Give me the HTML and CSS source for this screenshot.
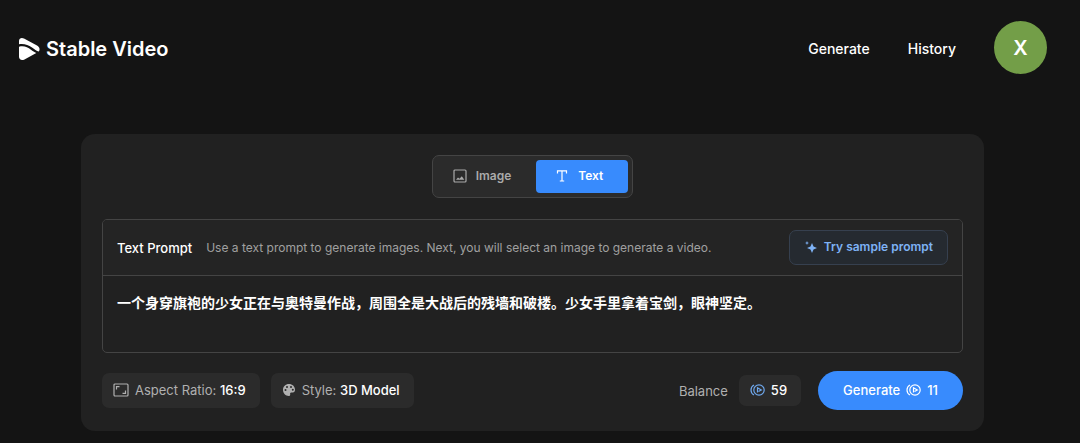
FILE: index.html
```html
<!DOCTYPE html>
<html lang="en">
<head>
    <meta charset="UTF-8">
    <meta name="viewport" content="width=device-width, initial-scale=1.0">
    <title>Stable Video</title>
    <link rel="stylesheet" href="styles.css">
</head>
<body>
    <header class="header">
        <a class="logo" href="#">
            <svg width="22" height="24" viewBox="0 0 22 24" fill="#fff" aria-hidden="true">
                <path d="M1 7.200V4C1 1.500 3.500 .3 6 1.600L19 8.600C21.500 10 22.300 12.300 20.800 14.600C18.500 14.200 16.500 12.500 14 10.600C10 7.600 6 6.500 1 7.200Z"/>
                <path d="M1 9.700C6 8.500 9.500 10 13 12.800C14.800 14.200 16.300 15.200 18.300 15.900L6.500 22.400C3.500 24 1 22.500 1 19.800Z"/>
            </svg>
            <span>Stable Video</span>
        </a>
        <nav class="nav">
            <a href="#">Generate</a>
            <a href="#">History</a>
            <button class="avatar" type="button">X</button>
        </nav>
    </header>

    <main class="panel">
        <div class="tabs">
            <button class="tab" type="button">
                <svg width="14" height="14" viewBox="0 0 14 14" fill="none" stroke="currentColor" aria-hidden="true">
                    <rect x="1" y="1" width="12" height="12" rx="1" stroke-width="1.2"/>
                    <path d="M3 10.800L5 8.400L6.500 9.800L8.800 7.200L11.300 10.800Z" fill="currentColor" stroke="none"/>
                </svg>
                Image
            </button>
            <button class="tab active" type="button">
                <svg width="12" height="14" viewBox="0 0 12 14" fill="none" stroke="currentColor" stroke-width="1.200" aria-hidden="true">
                    <path d="M1.500 4.500V1.800H10.500V4.500M6 1.800V12M3.800 12H8.200"/>
                </svg>
                Text
            </button>
        </div>

        <section class="prompt">
            <div class="prompt-head">
                <label for="prompt-text">Text Prompt</label>
                <p>Use a text prompt to generate images. Next, you will select an image to generate a video.</p>
                <button class="sample-btn" type="button">
                    <svg width="12" height="12" viewBox="0 0 12 12" fill="currentColor" aria-hidden="true">
                        <path d="M7 2L8.500 5.500L12 7L8.500 8.500L7 12L5.500 8.500L2 7L5.500 5.500Z"/>
                        <path d="M2 0L2.600 1.400L4 2L2.600 2.600L2 4L1.400 2.600L0 2L1.400 1.400Z"/>
                    </svg>
                    Try sample prompt
                </button>
            </div>
            <textarea id="prompt-text" lang="zh-CN" spellcheck="false">一个身穿旗袍的少女正在与奥特曼作战，周围全是大战后的残墙和破楼。少女手里拿着宝剑，眼神坚定。</textarea>
        </section>

        <div class="actions">
            <button class="chip" type="button">
                <svg width="16" height="14" viewBox="0 0 16 14" fill="none" stroke="currentColor" stroke-width="1.200" aria-hidden="true">
                    <rect x="1" y="1" width="14" height="12" rx="1"/>
                    <path d="M3.500 6.500V3.700H6.500M12.500 7.500V10.300H9.500"/>
                </svg>
                <span>Aspect Ratio: <b>16:9</b></span>
            </button>
            <button class="chip" type="button">
                <svg width="14" height="14" viewBox="0 0 14 14" fill="currentColor" fill-rule="evenodd" aria-hidden="true">
                    <path d="M7 1C3.500 1 1 3.600 1 6.800C1 10.200 3.600 13 6.800 13C7.800 13 8.300 12.300 8.200 11.500C8 10.400 8.100 9.500 9.400 9.500H10.800C12.200 9.500 13 8.300 13 6.800C13 3.400 10.300 1 7 1ZM3.500 6a1 1 0 1 0 0 2a1 1 0 1 0 0-2ZM5 3a1 1 0 1 0 0 2a1 1 0 1 0 0-2ZM9 3a1 1 0 1 0 0 2a1 1 0 1 0 0-2ZM10.800 5.800a1 1 0 1 0 0 2a1 1 0 1 0 0-2Z"/>
                </svg>
                <span>Style: <b>3D Model</b></span>
            </button>
            <span class="balance-label">Balance</span>
            <span class="balance">
                <svg width="15" height="12" viewBox="0 0 15 12" fill="none" stroke="currentColor" stroke-width="1.200" aria-hidden="true">
                    <circle cx="9" cy="6" r="5.200"/>
                    <path d="M4 1C0 3 0 9 4 11"/>
                    <path d="M7.500 8.500V3.800L11.300 6L8.500 7.600"/>
                </svg>
                59
            </span>
            <button class="generate-btn" type="button">
                Generate
                <svg width="15" height="12" viewBox="0 0 15 12" fill="none" stroke="currentColor" stroke-width="1.200" aria-hidden="true">
                    <circle cx="9" cy="6" r="5.200"/>
                    <path d="M4 1C0 3 0 9 4 11"/>
                    <path d="M7.500 8.500V3.800L11.300 6L8.500 7.600"/>
                </svg>
                11
            </button>
        </div>
    </main>
</body>
</html>
```

FILE: styles.css
```css
* {
    box-sizing: border-box;
}
body {
    margin: 0;
    background-color: #141414;
    color: #fff;
    font-family: Inter, "Noto Sans CJK SC", sans-serif;
    font-size: 13px;
    line-height: 20px;
}
button {
    font: inherit;
    font-weight: 500;
    color: inherit;
    border: none;
    padding: 0;
    cursor: pointer;
    white-space: nowrap;
}
a {
    color: inherit;
    text-decoration: none;
}
svg {
    flex: none;
}

/* Header */
.header {
    display: flex;
    align-items: center;
    justify-content: space-between;
    padding: 21px 33px 0 18px;
}
.logo {
    display: flex;
    align-items: center;
    gap: 6px;
    padding-top: 3px;
    font-size: 20px;
    font-weight: 600;
}
.nav {
    display: flex;
    align-items: center;
    gap: 38px;
    font-size: 14px;
    font-weight: 500;
}
.nav a {
    padding-top: 3px;
}
.avatar {
    width: 53px;
    height: 53px;
    border-radius: 50%;
    background-color: #739e48;
    font-size: 20px;
    font-weight: 600;
}

/* Main panel */
.panel {
    margin: 60px 96px 12px 81px;
    padding: 21px;
    border-radius: 14px;
    background-color: #212121;
}
.tabs {
    display: flex;
    width: fit-content;
    margin: 0 auto 21px;
    padding: 4px;
    border: 1px solid #444;
    border-radius: 7px;
    background-color: #2b2b2b;
}
.tab {
    display: flex;
    align-items: center;
    gap: 9px;
    padding: 6px 25px 7px 16px;
    border-radius: 4px;
    background: none;
    color: #aaa;
    font-size: 12px;
    font-weight: 600;
}
.tab.active {
    gap: 10px;
    padding-left: 20px;
    background-color: #388bfd;
    color: #fff;
}

/* Prompt box */
.prompt {
    border: 1px solid #444;
    border-radius: 5px;
}
.prompt-head {
    display: flex;
    align-items: center;
    gap: 14px;
    padding: 10px 14px;
    border-bottom: 1px solid #444;
    border-radius: 4px 4px 0 0;
    background-color: #242424;
}
.prompt-head label {
    font-size: 13px;
    font-weight: 500;
}
.prompt-head p {
    margin: 0;
    color: #a0a0a0;
    font-size: 12px;
}
.sample-btn {
    display: flex;
    align-items: center;
    gap: 7px;
    margin-left: auto;
    padding: 6px 14px 7px 15px;
    border: 1px solid #36404f;
    border-radius: 7px;
    background-color: #252a30;
    color: #7eb2f5;
    font-size: 12px;
    font-weight: 600;
}
.prompt textarea {
    display: block;
    width: 100%;
    height: 76px;
    padding: 17px 14px;
    border: none;
    outline: none;
    resize: none;
    background: none;
    color: #fff;
    font: inherit;
    font-size: 14px;
    font-weight: 600;
}

/* Bottom row */
.actions {
    display: flex;
    align-items: center;
    gap: 11px;
    margin-top: 18px;
}
.chip {
    display: flex;
    align-items: center;
    gap: 6px;
    padding: 7px 14px 8px 11px;
    border-radius: 7px;
    background-color: #2b2b2b;
    color: #b0b0b0;
    font-weight: 400;
}
.chip b {
    color: #fff;
    font-weight: 500;
}
.balance-label {
    margin-left: auto;
    color: #b0b0b0;
}
.balance {
    display: flex;
    align-items: center;
    gap: 6px;
    padding: 5px 14px 6px 11px;
    border-radius: 7px;
    background-color: #2b2b2b;
    font-weight: 500;
}
.balance svg {
    color: #6fa8ee;
}
.generate-btn {
    display: flex;
    align-items: center;
    gap: 6px;
    margin-left: 6px;
    padding: 9px 25px 10px;
    border-radius: 20px;
    background-color: #388bfd;
}
```
